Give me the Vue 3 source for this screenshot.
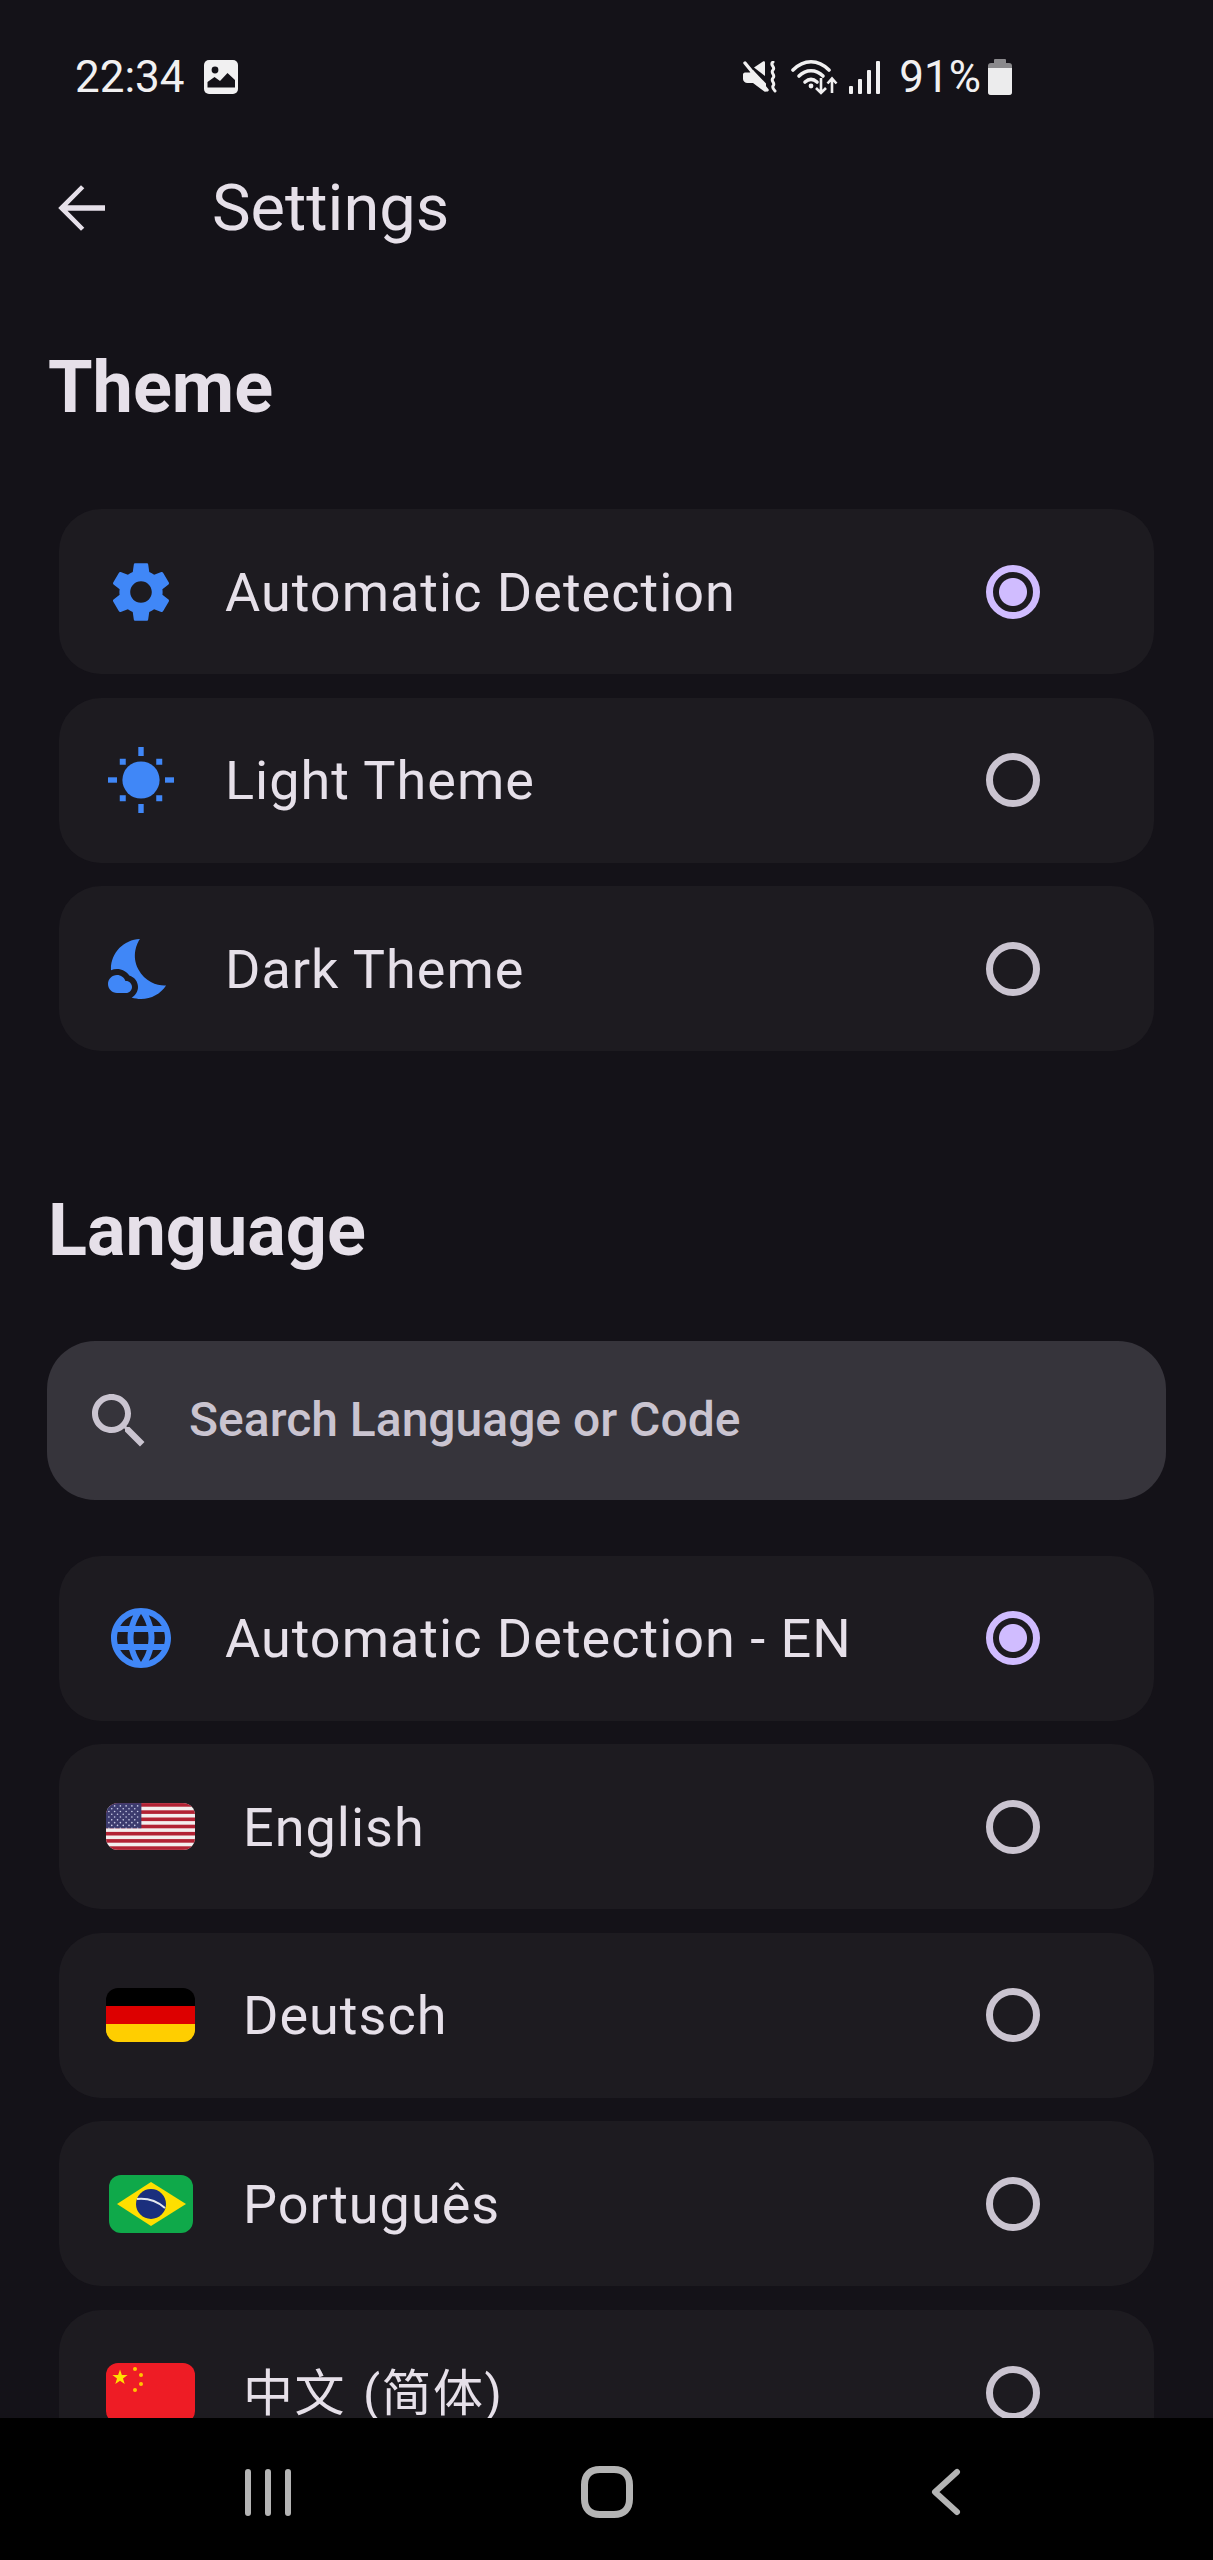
<script setup>
const themes = [
  { label: 'Automatic Detection', icon: 'gear', on: true },
  { label: 'Light Theme', icon: 'sun', on: false },
  { label: 'Dark Theme', icon: 'moon', on: false }
]
const languages = [
  { label: 'Automatic Detection - EN', icon: 'globe', on: true },
  { label: 'English', flag: 'us', on: false },
  { label: 'Deutsch', flag: 'de', on: false },
  { label: 'Português', flag: 'br', on: false },
  { label: '中文 (简体)', flag: 'cn', on: false }
]
const stripes = [0, 2, 4, 6, 8, 10, 12]
const rays = [0, 90, 180, 270]
const diag = [45, 135, 225, 315]
const stars = []
for (let r = 0; r < 9; r++) {
  const n = r % 2 ? 5 : 6
  for (let c = 0; c < n; c++) stars.push({ x: (r % 2 ? 7 : 3.5) + c * 7, y: 2.6 + r * 2.6 })
}
</script>

<template>
  <div class="phone">
    <header class="status">
      <div class="status-left">
        <span class="clock">22:34</span>
        <svg class="gallery" width="34" height="34" viewBox="0 0 34 34">
          <rect width="34" height="34" rx="5" fill="#f1f0f1" />
          <circle cx="11" cy="10" r="3.4" fill="#141218" />
          <path d="M3.5 27.5V22l7-5 5.5 4 7.5-8 7.5 7v7.5z" fill="#141218" />
        </svg>
      </div>
      <div class="status-right">
        <svg width="34" height="32" viewBox="0 0 34 32">
          <path d="M0 13.5c0-1 .8-2 2-2h5l3-2.5 13 13.5V30c0 1-1 1-1.600.5L10 22H4.500C2 22 0 20 0 18z" fill="#f1f0f1" />
          <path d="M11 6.500 20 0.600c.8-.5 2-.2 2 1V15z" fill="#f1f0f1" />
          <path d="M2 2 24 29" stroke="#f1f0f1" stroke-width="3.400" stroke-linecap="round" />
          <path d="M30 1c-4 3 3 5 0 8s3 5 0 8 3 5 0 8c-1 2 1 4 2 5" fill="none" stroke="#f1f0f1" stroke-width="3" stroke-linecap="round" />
        </svg>
        <svg class="wifi" width="48" height="36" viewBox="0 0 48 36">
          <g fill="none" stroke="#f1f0f1" stroke-width="3.600" stroke-linecap="round">
            <path d="M2 11C13 0 27 0 38 11" />
            <path d="M8 17c7-7 17-7 24 0" />
            <path d="M14 23c4-3.500 8-3.500 12 0" />
          </g>
          <circle cx="20" cy="27" r="2.400" fill="#f1f0f1" />
          <g fill="none" stroke="#f1f0f1" stroke-width="2.600">
            <path d="M30 19v15M25 29l5 5 5-5" />
            <path d="M41 34V20M36.500 24.500l4.500-5 4.500 5" />
          </g>
        </svg>
        <svg class="signal" width="32" height="33" viewBox="0 0 32 33">
          <rect x="0" y="25" width="4" height="8" rx="1" fill="#f1f0f1" />
          <rect x="9" y="18" width="4" height="15" rx="1" fill="#f1f0f1" />
          <rect x="18" y="9" width="4" height="24" rx="1" fill="#f1f0f1" />
          <rect x="27" y="0" width="4" height="33" rx="1" fill="#f1f0f1" />
        </svg>
        <span class="percent">91%</span>
        <svg class="battery" width="24" height="36" viewBox="0 0 24 36">
          <path d="M7 0h10a1 1 0 0 1 1 1v3H6V1a1 1 0 0 1 1-1z" fill="#8a898c" />
          <path d="M3 4h18a3 3 0 0 1 3 3v26a3 3 0 0 1-3 3H3a3 3 0 0 1-3-3V7a3 3 0 0 1 3-3z" fill="#8a898c" />
          <path d="M0 9h24v24a3 3 0 0 1-3 3H3a3 3 0 0 1-3-3z" fill="#ececed" />
        </svg>
      </div>
    </header>

    <div class="appbar">
      <svg class="back" width="72" height="72" viewBox="0 0 24 24">
        <path d="M20 11.100H7.500l5.600-5.700L12 4.400 4.400 12l7.600 7.600 1.100-1-5.600-5.700H20z" fill="#e6e0e9" />
      </svg>
      <h1 class="title">Settings</h1>
    </div>

    <main class="content">
      <h2 class="section theme-head">Theme</h2>
      <div class="list">
        <div v-for="t in themes" :key="t.label" class="row">
          <svg class="icon" viewBox="0 0 24 24" width="72" height="72">
            <path v-if="t.icon === 'gear'" d="M19.140 12.940c.04-.3.06-.61.06-.94 0-.32-.02-.64-.07-.94l2.030-1.580c.18-.14.23-.41.12-.61l-1.920-3.320c-.12-.22-.37-.29-.59-.22l-2.390.96c-.5-.38-1.030-.7-1.620-.94L14.400 2.810c-.04-.24-.24-.41-.48-.41h-3.840c-.24 0-.43.17-.47.41L9.250 5.350c-.59.24-1.130.57-1.620.94l-2.390-.96c-.22-.08-.47 0-.59.22L2.740 8.870c-.12.21-.08.47.12.61l2.030 1.580c-.05.3-.09.63-.09.94s.02.64.07.94l-2.030 1.580c-.18.14-.23.41-.12.61l1.920 3.320c.12.22.37.29.59.22l2.390-.96c.5.38 1.030.7 1.620.94l.36 2.540c.05.24.24.41.48.41h3.840c.24 0 .44-.17.47-.41l.36-2.540c.59-.24 1.130-.56 1.620-.94l2.390.96c.22.08.47 0 .59-.22l1.920-3.320c.12-.22.07-.47-.12-.61l-2.010-1.580zM12 15.600c-1.980 0-3.600-1.620-3.600-3.600s1.620-3.600 3.600-3.600 3.600 1.620 3.600 3.600-1.620 3.600-3.600 3.600z" fill="#4087f7" />
            <g v-else-if="t.icon === 'sun'" fill="#4087f7">
              <circle cx="12" cy="12" r="6.200" />
              <rect v-for="a in rays" :key="a" x="11.100" y="1" width="1.800" height="3" :transform="`rotate(${a} 12 12)`" />
              <rect v-for="a in diag" :key="a" x="11" y="2.400" width="2" height="2" :transform="`rotate(${a} 12 12) rotate(45 12 3.400)`" />
            </g>
            <g v-else fill="#4087f7">
              <path d="M11.100 12.080C8.770 7.570 10.600 3.600 11.630 2.010 6.270 2.200 1.980 6.590 1.980 12c0 .14.02.28.02.42.62-.27 1.290-.42 2-.42 1.660 0 3.180.83 4.100 2.150 1.670.48 2.900 2.020 2.900 3.850 0 1.520-.87 2.830-2.120 3.510.98.32 2.030.5 3.110.5 3.500 0 6.580-1.800 8.370-4.520-2.360.23-6.980-.97-9.260-5.410z" />
              <path d="M7 16h-.18C6.400 14.840 5.300 14 4 14c-1.660 0-3 1.340-3 3s1.340 3 3 3h3c1.100 0 2-.9 2-2s-.9-2-2-2z" />
            </g>
          </svg>
          <span class="label">{{ t.label }}</span>
          <span class="radio" :class="{ on: t.on }"></span>
        </div>
      </div>

      <h2 class="section lang-head">Language</h2>
      <div class="search">
        <svg class="icon" viewBox="0 0 24 24" width="72" height="72">
          <path d="M15.500 14h-.79l-.28-.27C15.410 12.590 16 11.110 16 9.500 16 5.910 13.090 3 9.500 3S3 5.910 3 9.500 5.910 16 9.500 16c1.610 0 3.090-.59 4.230-1.570l.27.28v.79l5 4.990L20.490 19l-4.990-5zm-6 0C7.010 14 5 11.990 5 9.500S7.010 5 9.500 5 14 7.010 14 9.500 11.990 14 9.500 14z" fill="#cac4d0" />
        </svg>
        <span class="hint">Search Language or Code</span>
      </div>

      <div class="list">
        <div v-for="l in languages" :key="l.label" class="row">
          <svg v-if="l.icon" class="icon" viewBox="0 0 24 24" width="72" height="72">
            <path d="M11.990 2C6.470 2 2 6.480 2 12s4.470 10 9.990 10C17.520 22 22 17.520 22 12S17.520 2 11.990 2zm6.930 6h-2.950c-.32-1.250-.78-2.450-1.380-3.560 1.840.63 3.370 1.910 4.330 3.560zM12 4.040c.83 1.200 1.480 2.530 1.910 3.960h-3.820c.43-1.430 1.080-2.760 1.910-3.960zM4.260 14C4.100 13.360 4 12.690 4 12s.1-1.360.26-2h3.380c-.08.66-.14 1.320-.14 2 0 .68.06 1.340.14 2H4.260zm.82 2h2.950c.32 1.250.78 2.450 1.380 3.560-1.840-.63-3.370-1.900-4.330-3.560zm2.950-8H5.080c.96-1.660 2.490-2.930 4.330-3.560C8.810 5.550 8.350 6.750 8.030 8zM12 19.960c-.83-1.200-1.480-2.530-1.910-3.960h3.820c-.43 1.430-1.080 2.760-1.910 3.960zM14.340 14H9.660c-.09-.66-.16-1.320-.16-2 0-.68.07-1.350.16-2h4.680c.09.65.16 1.320.16 2 0 .68-.07 1.340-.16 2zm.25 5.560c.6-1.110 1.060-2.310 1.380-3.560h2.950c-.96 1.650-2.490 2.930-4.330 3.560zM16.360 14c.08-.66.14-1.320.14-2 0-.68-.06-1.340-.14-2h3.380c.16.64.26 1.310.26 2s-.1 1.360-.26 2h-3.380z" fill="#4087f7" />
          </svg>
          <div v-else class="flag-box">
            <svg v-if="l.flag === 'us'" class="flag" width="89" height="47" viewBox="0 0 78 41">
              <rect width="78" height="41" fill="#f3eeee" />
              <rect v-for="s in stripes" :key="s" y="0" :transform="`translate(0 ${s * 41 / 13})`" width="78" :height="41 / 13" fill="#b22234" />
              <rect width="31" height="22" fill="#3c3b6e" />
              <circle v-for="(p, i) in stars" :key="i" :cx="p.x * 0.72" :cy="p.y * 0.94" r=".7" fill="#c9cbe6" />
            </svg>
            <svg v-else-if="l.flag === 'de'" class="flag" width="89" height="54" viewBox="0 0 3 3" preserveAspectRatio="none">
              <rect width="3" height="1" fill="#000" />
              <rect y="1" width="3" height="1" fill="#dd0000" />
              <rect y="2" width="3" height="1" fill="#ffce00" />
            </svg>
            <svg v-else-if="l.flag === 'br'" class="flag" width="84" height="58" viewBox="0 0 84 58">
              <rect width="84" height="58" fill="#0fa94a" />
              <path d="M42 7 77 29 42 51 8 29z" fill="#fedf00" />
              <circle cx="42" cy="29" r="15" fill="#1b2f7d" />
              <path d="M28 24c10-1 20 2 28 9" fill="none" stroke="#e4e8ee" stroke-width="2" />
            </svg>
            <svg v-else class="flag" width="89" height="60" viewBox="0 0 89 60">
              <rect width="89" height="60" fill="#ee1c25" />
              <polygon points="14,6.500 15.900,11.900 21.600,12 17,15.500 18.700,21 14,17.700 9.300,21 11,15.500 6.400,12 12.100,11.900" fill="#ffe000" />
              <circle cx="29" cy="6" r="2" fill="#ffc400" />
              <circle cx="35" cy="12" r="2" fill="#ffc400" />
              <circle cx="35" cy="21" r="2" fill="#ffc400" />
              <circle cx="29" cy="27" r="2" fill="#ffc400" />
            </svg>
          </div>
          <span class="label" :class="{ cjk: l.flag === 'cn' }">{{ l.label }}</span>
          <span class="radio" :class="{ on: l.on }"></span>
        </div>
      </div>
    </main>

    <nav class="navbar">
      <svg width="46" height="47" viewBox="0 0 46 47">
        <g stroke="#b4b4b4" stroke-width="6" stroke-linecap="round">
          <path d="M3 3v41M23 3v41M43 3v41" />
        </g>
      </svg>
      <svg width="52" height="52" viewBox="0 0 52 52">
        <path d="M19 3.500h14C43 3.500 48.500 9 48.500 19v14C48.500 43 43 48.500 33 48.500H19C9 48.500 3.500 43 3.500 33V19C3.500 9 9 3.500 19 3.500z" fill="none" stroke="#b4b4b4" stroke-width="7" />
      </svg>
      <svg width="30" height="48" viewBox="0 0 30 48">
        <path d="M26 4 4 24l22 20" fill="none" stroke="#b4b4b4" stroke-width="6" stroke-linecap="round" stroke-linejoin="round" />
      </svg>
    </nav>
  </div>
</template>

<style>
html, body { margin: 0; background: #141218; }
</style>

<style scoped>
.phone {
  width: 1213px;
  height: 2560px;
  display: flex;
  flex-direction: column;
  background: #141218;
  color: #e6e0e9;
  font-family: Roboto, "Noto Sans CJK SC", sans-serif;
  overflow: hidden;
}
.status {
  height: 154px;
  flex: none;
  display: flex;
  align-items: center;
  justify-content: space-between;
  padding: 0 201px 0 75px;
  color: #f1f0f1;
}
.status-left, .status-right { display: flex; align-items: center; }
.clock { font-size: 44px; line-height: 50px; }
.gallery { margin-left: 19px; }
.wifi { margin-left: 14px; }
.signal { margin-left: 10px; }
.percent { font-size: 44px; line-height: 50px; margin-left: 18px; }
.battery { margin-left: 7px; }
.appbar {
  height: 108px;
  flex: none;
  display: flex;
  align-items: center;
  padding-left: 45px;
}
.title {
  margin: 0 0 0 95px;
  font-size: 65px;
  font-weight: 400;
  line-height: 76px;
}
.content { flex: 1; min-height: 0; overflow: hidden; }
.section {
  margin: 0;
  padding-left: 48px;
  font-size: 72px;
  font-weight: 700;
  line-height: 76px;
}
.theme-head { margin-top: 88px; margin-bottom: 83px; }
.lang-head { margin-top: 142px; margin-bottom: 72px; }
.list {
  display: flex;
  flex-direction: column;
  gap: 23.600px;
  padding: 0 59px;
}
.row {
  flex: none;
  height: 165px;
  display: flex;
  align-items: center;
  padding-left: 46px;
  border-radius: 42px;
  background: #1d1b20;
}
.icon { flex: none; }
.flag-box {
  flex: none;
  width: 89px;
  margin-left: 1px;
  display: flex;
  justify-content: center;
}
.flag { display: block; border-radius: 12px; }
.label {
  flex: 1;
  margin-left: 48px;
  padding-top: 2px;
  font-size: 54px;
  letter-spacing: 1px;
  line-height: 64px;
}
.label.cjk { font-size: 50px; letter-spacing: 1.500px; word-spacing: 3px; }
.radio {
  flex: none;
  box-sizing: border-box;
  width: 54px;
  height: 54px;
  margin-right: 114px;
  border: 7px solid #cac4d0;
  border-radius: 50%;
}
.radio.on {
  border-color: #d0bcff;
  background: radial-gradient(circle, #d0bcff 13.500px, transparent 14.500px);
}
.search {
  height: 159px;
  margin: 0 47px 55.500px;
  display: flex;
  align-items: center;
  padding-left: 36px;
  border-radius: 48px;
  background: #36343b;
}
.hint {
  margin-left: 34px;
  margin-top: -2px;
  font-size: 48px;
  font-weight: 500;
  color: #cac4d0;
}
.navbar {
  height: 142px;
  flex: none;
  box-sizing: border-box;
  padding-top: 6px;
  display: grid;
  grid-template-columns: repeat(3, 339px);
  justify-content: center;
  justify-items: center;
  align-items: center;
  background: #000;
}
</style>
